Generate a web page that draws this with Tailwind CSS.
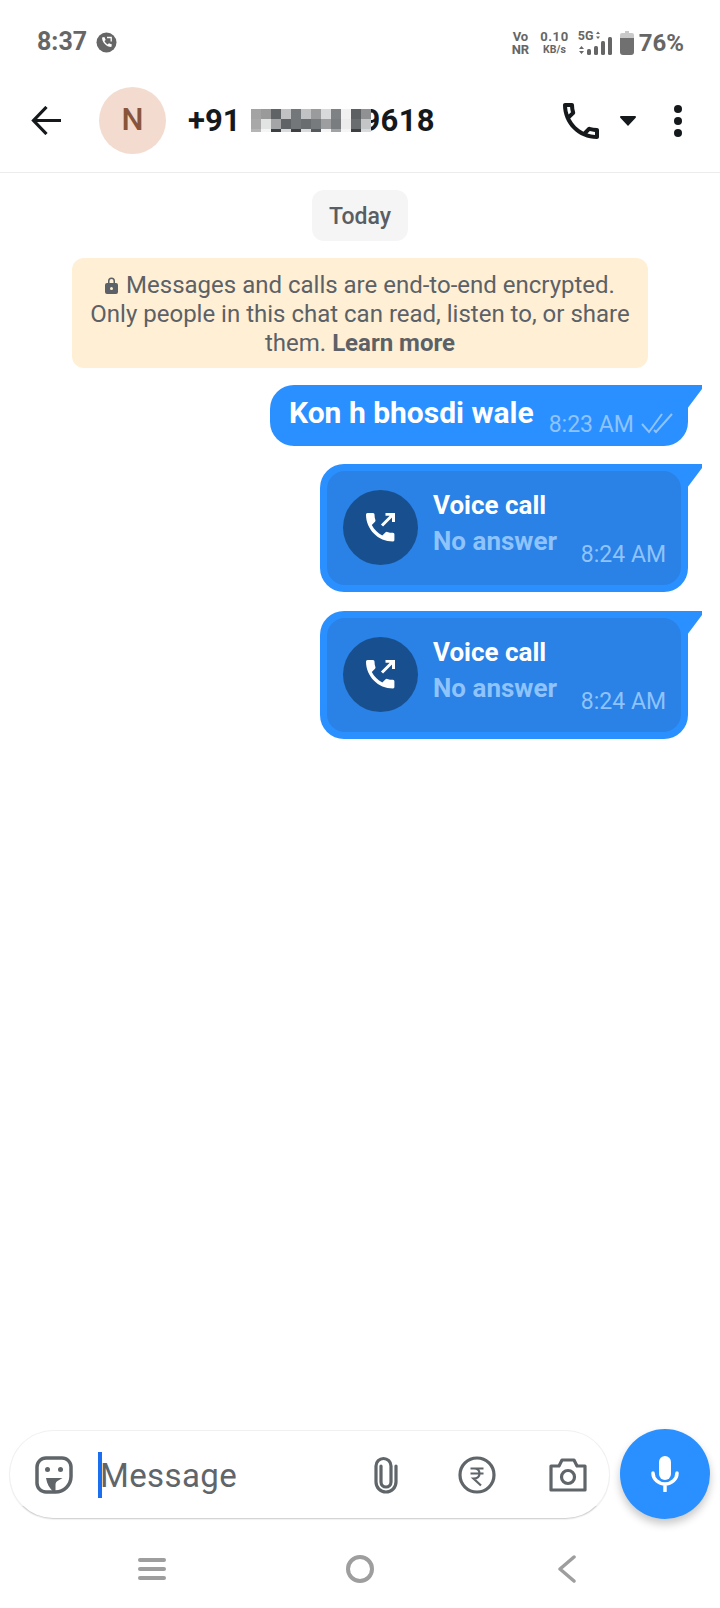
<!DOCTYPE html>
<html>
<head>
<meta charset="utf-8">
<script src="https://cdn.jsdelivr.net/npm/@tailwindcss/browser@4"></script>
</head>
<body class="bg-white">
<div class="w-[720px] h-[1608px] flex flex-col bg-white font-['Roboto',sans-serif] overflow-hidden">

  <!-- status bar -->
  <div class="h-[76px] shrink-0 flex items-start justify-between pl-[37px] pr-[36px] pt-[25px] text-[#666]">
    <div class="flex items-center gap-[9px]">
      <span class="text-[25px] leading-[34px] font-bold">8:37</span>
      <svg class="w-[21px] h-[21px]" viewBox="0 0 21 21"><circle cx="10.500" cy="10.500" r="10" fill="#666"/><path d="M6 5.500l2.400-.6 1.300 3-1.300 1.200c.7 1.600 1.800 2.700 3.300 3.400l1.200-1.300 3 1.400-.6 2.400c-5-.2-9-4.300-9.300-9.500z" fill="#fff"/><path d="M11 5.500h4.200v4" fill="none" stroke="#fff" stroke-width="1.300"/></svg>
    </div>
    <div class="flex items-center h-[34px] mt-[1px]">
      <div class="flex flex-col items-center text-[13px] leading-[13px] font-bold"><span>Vo</span><span>NR</span></div>
      <div class="flex flex-col items-center ml-[11px]"><span class="text-[13px] leading-[13px] font-bold tracking-[0.6px]">0.10</span><span class="text-[10.500px] leading-[13px] font-bold">KB/s</span></div>
      <div class="w-[36px] h-[27px] ml-[9px] relative">
        <span class="absolute left-0 -top-[1px] text-[12.500px] leading-[14px] font-bold">5G</span>
        <svg class="w-[36px] h-[27px]" viewBox="0 0 36 27" fill="#666"><path d="M18 4l2-2.500 2 2.500zM18 6.500l2 2.500 2-2.500zM1 19l2.500-3 2.500 3zM1 21l2.500 3 2.500-3z"/><rect x="9" y="19" width="4" height="6" rx="1.500"/><rect x="16" y="16" width="4" height="9" rx="1.500"/><rect x="23" y="11" width="4" height="14" rx="1.500"/><rect x="30" y="7" width="4" height="18" rx="1.500"/></svg>
      </div>
      <svg class="w-[14px] h-[24px] ml-[6px]" viewBox="0 0 14 24"><path d="M5 0h4v2h3a2 2 0 0 1 2 2v3H0V4a2 2 0 0 1 2-2h3z" fill="#c9c9c9"/><path d="M0 7h14v14a3 3 0 0 1-3 3H3a3 3 0 0 1-3-3z" fill="#707070"/></svg>
      <span class="text-[24px] leading-[34px] font-bold ml-[5px]">76%</span>
    </div>
  </div>

  <!-- header -->
  <header class="h-[97px] shrink-0 border-b border-[#ececec] flex items-center pl-[31px] pr-[38px] pb-[7px]">
    <svg class="w-[30px] h-[29px] shrink-0" viewBox="0 0 30 29" fill="none" stroke="#15191c" stroke-width="3.200"><path d="M30 14.500H3M15.500 1L2.500 14.500 15.500 28"/></svg>
    <div class="w-[67px] h-[67px] ml-[38px] rounded-full bg-[#f3dccf] flex items-center justify-center text-[#89553a] text-[31px] font-medium">N</div>
    <div class="ml-[22px] flex items-center text-[#15191c] text-[31px] font-bold leading-[36px]">
      <span>+91</span>
      <div class="relative z-10 ml-[11px] grid grid-cols-[repeat(12,10px)] grid-rows-[10px_10px_3px] h-[23px] w-[120px]">
        <i class="bg-[#a3a3a3]"></i><i class="bg-[#9a9a9a]"></i><i class="bg-[#5f6366]"></i><i class="bg-[#c0c2c3]"></i><i class="bg-[#73777a]"></i><i class="bg-[#c0c2c3]"></i><i class="bg-[#999b9c]"></i><i class="bg-[#d8d9da]"></i><i class="bg-[#7f8284]"></i><i class="bg-[#f1f1f1]"></i><i class="bg-[#5c6063]"></i><i class="bg-[#8f9193]"></i>
        <i class="bg-[#a8a8a8]"></i><i class="bg-[#e2e3e3]"></i><i class="bg-[#a3a5a6]"></i><i class="bg-[#5f6366]"></i><i class="bg-[#73777a]"></i><i class="bg-[#696d70]"></i><i class="bg-[#777b7d]"></i><i class="bg-[#9c9e9f]"></i><i class="bg-[#7a7d7f]"></i><i class="bg-[#ececec]"></i><i class="bg-[#6a6d70]"></i><i class="bg-[#c4c5c6]"></i>
        <i class="bg-[#b5b5b5]"></i><i class="bg-[#f5f5f5]"></i><i class="bg-[#3c4043]"></i><i class="bg-[#d9dadb]"></i><i class="bg-[#3c4043]"></i><i class="bg-[#d9dadb]"></i><i class="bg-[#55595c]"></i><i class="bg-[#f5f5f5]"></i><i class="bg-[#a0a2a4]"></i><i class="bg-[#f5f5f5]"></i><i class="bg-[#3c4043]"></i><i class="bg-[#d9dadb]"></i>
      </div>
      <span class="-ml-[9px] tracking-[0.3px]">9618</span>
    </div>
    <svg class="w-[36px] h-[36px] ml-auto fill-[#15191c]" viewBox="3 3 18 18"><path d="M6.540 5c.06.89.21 1.760.45 2.590l-1.200 1.200c-.41-1.200-.67-2.470-.76-3.790h1.510m9.860 12.020c.85.24 1.720.39 2.600.45v1.490c-1.320-.09-2.590-.35-3.800-.75l1.200-1.190M7.500 3H4c-.55 0-1 .45-1 1 0 9.390 7.610 17 17 17 .55 0 1-.45 1-1v-3.490c0-.55-.45-1-1-1-1.240 0-2.450-.2-3.570-.57-.1-.04-.21-.05-.31-.05-.26 0-.51.1-.71.29l-2.200 2.200c-2.830-1.450-5.150-3.760-6.590-6.590l2.200-2.200c.28-.28.36-.67.25-1.020C8.700 6.450 8.500 5.250 8.500 4c0-.55-.45-1-1-1z"/></svg>
    <svg class="w-[16px] h-[10px] ml-[21px]" viewBox="0 0 16 10"><path d="M1 0h14a1 1 0 0 1 .7 1.700L8 10 .3 1.700A1 1 0 0 1 1 0z" fill="#15191c"/></svg>
    <div class="flex flex-col gap-[4px] ml-[38px]"><i class="block w-[8px] h-[8px] rounded-full bg-[#15191c]"></i><i class="block w-[8px] h-[8px] rounded-full bg-[#15191c]"></i><i class="block w-[8px] h-[8px] rounded-full bg-[#15191c]"></i></div>
  </header>

  <!-- chat -->
  <main class="flex-1 flex flex-col items-center pt-[17px]">
    <div class="h-[51px] w-[96px] pt-[3px] rounded-[12px] bg-[#f5f5f5] flex items-center justify-center text-[#585e63] text-[23px] font-medium">Today</div>
    <div class="mt-[17px] w-[576px] h-[110px] rounded-[12px] bg-[#ffefd5] text-center text-[#5b6166] text-[24px] leading-[29px] pt-[13px]">
      <svg class="inline-block w-[13px] h-[17px] mr-[8px] -mt-[3px] align-middle" viewBox="0 0 13 17"><path d="M2 6h1V4a3.500 3.500 0 0 1 7 0v2h1a2 2 0 0 1 2 2v7a2 2 0 0 1-2 2H2a2 2 0 0 1-2-2V8a2 2 0 0 1 2-2zm2.500 0h4V4a2 2 0 0 0-4 0z" fill="#5b6166"/><circle cx="6.500" cy="11.500" r="1.500" fill="#ffefd5"/></svg>Messages and calls are end-to-end encrypted.<br>Only people in this chat can read, listen to, or share<br>them. <b class="font-bold">Learn more</b>
    </div>

    <div class="w-full pr-[18px] pl-[18px] mt-[17px] flex flex-col items-end gap-[19px]">
      <!-- text bubble -->
      <div class="relative w-[432px] h-[61px]">
        <div class="absolute right-0 top-0 w-[30px] h-[24px] bg-[#2a90ff] [clip-path:polygon(0_0,100%_0,100%_4px,50%_100%,0_100%)]"></div>
        <div class="h-full w-[418px] rounded-[24px] rounded-tr-none bg-[#2a90ff] flex items-start pl-[19px]">
          <span class="text-white text-[30px] leading-[36px] font-bold mt-[10px] whitespace-nowrap">Kon h bhosdi wale</span>
          <span class="text-[#8fc3fb] text-[23px] leading-[28px] ml-[15px] mt-[26px] whitespace-nowrap">8:23 AM</span>
          <svg class="w-[32px] h-[22px] ml-[7px] mt-[27px] shrink-0" viewBox="0 0 32 22" fill="none" stroke="#8fc3fb" stroke-width="2"><path d="M1 12l7 8L21 2M13 18l2 2L31 2"/></svg>
        </div>
      </div>

      <!-- call bubble -->
      <div class="relative w-[382px] h-[128px] -mt-[1px]">
        <div class="absolute right-0 top-0 w-[30px] h-[24px] bg-[#2a90ff] [clip-path:polygon(0_0,100%_0,100%_4px,50%_100%,0_100%)]"></div>
        <div class="h-full w-[368px] rounded-[24px] rounded-tr-none bg-[#2a90ff] p-[7px]">
          <div class="relative h-full rounded-[18px] bg-[#2a81e6] flex items-start pl-[16px] pt-[16px]">
            <div class="w-[75px] h-[75px] mt-[3px] shrink-0 rounded-full bg-[#18508f] flex items-center justify-center">
              <svg class="w-[29px] h-[29px]" viewBox="0 0 29 29"><path d="M0 1.500A1.500 1.500 0 0 1 1.500 0h5.500a1.500 1.500 0 0 1 1.500 1.500c0 2 .3 3.900.9 5.600.2.600.1 1.200-.4 1.700L5.800 12.100c2.300 4.500 6 8.100 10.500 10.500l3.300-3.300c.4-.4 1.100-.6 1.600-.4 1.800.6 3.700.9 5.700.9a1.500 1.500 0 0 1 1.500 1.500v5.500A1.500 1.500 0 0 1 27 28.500C12.100 28.500 0 16.400 0 1.500z" fill="#fff"/><path d="M16 12.500L27 1.500M19.500 1.300h8v7.700" fill="none" stroke="#fff" stroke-width="3"/></svg>
            </div>
            <div class="ml-[15px] flex flex-col">
              <span class="text-white text-[26px] leading-[36px] font-bold">Voice call</span>
              <span class="text-[#8fc3fb] text-[26px] leading-[36px] font-bold">No answer</span>
            </div>
            <span class="absolute right-[15px] bottom-[16px] text-[#8fc3fb] text-[23px] leading-[28px]">8:24 AM</span>
          </div>
        </div>
      </div>

      <div class="relative w-[382px] h-[128px]">
        <div class="absolute right-0 top-0 w-[30px] h-[24px] bg-[#2a90ff] [clip-path:polygon(0_0,100%_0,100%_4px,50%_100%,0_100%)]"></div>
        <div class="h-full w-[368px] rounded-[24px] rounded-tr-none bg-[#2a90ff] p-[7px]">
          <div class="relative h-full rounded-[18px] bg-[#2a81e6] flex items-start pl-[16px] pt-[16px]">
            <div class="w-[75px] h-[75px] mt-[3px] shrink-0 rounded-full bg-[#18508f] flex items-center justify-center">
              <svg class="w-[29px] h-[29px]" viewBox="0 0 29 29"><path d="M0 1.500A1.500 1.500 0 0 1 1.500 0h5.500a1.500 1.500 0 0 1 1.500 1.500c0 2 .3 3.900.9 5.600.2.600.1 1.200-.4 1.700L5.800 12.100c2.300 4.500 6 8.100 10.500 10.500l3.300-3.300c.4-.4 1.100-.6 1.600-.4 1.800.6 3.700.9 5.700.9a1.500 1.500 0 0 1 1.500 1.500v5.500A1.500 1.500 0 0 1 27 28.500C12.100 28.500 0 16.400 0 1.500z" fill="#fff"/><path d="M16 12.500L27 1.500M19.500 1.300h8v7.700" fill="none" stroke="#fff" stroke-width="3"/></svg>
            </div>
            <div class="ml-[15px] flex flex-col">
              <span class="text-white text-[26px] leading-[36px] font-bold">Voice call</span>
              <span class="text-[#8fc3fb] text-[26px] leading-[36px] font-bold">No answer</span>
            </div>
            <span class="absolute right-[15px] bottom-[16px] text-[#8fc3fb] text-[23px] leading-[28px]">8:24 AM</span>
          </div>
        </div>
      </div>
    </div>
  </main>

  <!-- composer -->
  <div class="shrink-0 h-[90px] flex items-center pl-[9px] pr-[10px] gap-[10px]">
    <div class="h-[89px] mt-[1px] w-[601px] rounded-[45px] bg-white border border-[#f0f0f0] border-b-[#d4d4d4] shadow-[0_1px_1px_rgba(0,0,0,0.06)] flex items-center pl-[25px]">
      <svg class="w-[38px] h-[38px] shrink-0" viewBox="0 0 38 38" fill="none"><path d="M11 2h16a9 9 0 0 1 9 9v9.500C36 29 29 36 20.500 36H11a9 9 0 0 1-9-9V11a9 9 0 0 1 9-9z" stroke="#5f6569" stroke-width="3.500" stroke-linejoin="round"/><circle cx="12.500" cy="13.500" r="2.500" fill="#5f6569"/><circle cx="25.500" cy="13.500" r="2.500" fill="#5f6569"/><path d="M11 22h16.500l-5 3c-1.500 1-2 2-2 4v6h-3c-3-3-5.500-7-6.500-13z" fill="#5f6569"/></svg>
      <div class="w-[4px] h-[46px] bg-[#1a6ff0] ml-[25px] shrink-0"></div>
      <span class="text-[#5f6569] text-[33px] leading-[40px] tracking-[0.4px] -ml-[2px] mt-[2px]">Message</span>
      <svg class="w-[24px] h-[38px] ml-[137px] shrink-0" viewBox="0 0 24 38" fill="none" stroke="#5f6569" stroke-width="3.200" stroke-linecap="round"><path d="M22 10V26A10 10 0 0 1 2 26V10A7.500 7.500 0 0 1 17 10V26A5 5 0 0 1 7 26V10"/></svg>
      <svg class="w-[38px] h-[38px] ml-[60px] shrink-0" viewBox="0 0 38 38" fill="none" stroke="#5f6569"><circle cx="19" cy="19" r="17" stroke-width="3.200"/><path d="M12.500 12.500h13M12.500 17.500h13M16 12.500c4 0 5.500 2 5.500 5s-2 5-6 5l7.500 7" stroke-width="2.200"/></svg>
      <svg class="w-[38px] h-[34px] ml-[53px] shrink-0" viewBox="0 0 38 34" fill="none" stroke="#5f6569" stroke-width="3.200" stroke-linejoin="round"><path d="M2 8h8l3-6h12l3 6h8v24H2z"/><circle cx="19" cy="19" r="6.500"/></svg>
    </div>
    <div class="w-[90px] h-[90px] shrink-0 rounded-full bg-[#2a90ff] shadow-[0_5px_8px_rgba(0,0,0,0.22)] flex items-center justify-center">
      <svg class="w-[28px] h-[36px]" viewBox="0 0 28 36" fill="none"><rect x="8" y="0" width="12" height="24" rx="6" fill="#fff"/><path d="M2 17a12 11 0 0 0 24 0M14 28v7" stroke="#fff" stroke-width="3.500" stroke-linecap="round"/></svg>
    </div>
  </div>

  <!-- nav -->
  <nav class="h-[89px] shrink-0 flex items-start pt-[39px] pl-[138px]">
    <div class="w-[28px] flex flex-col gap-[5px]"><i class="block h-[4px] rounded-full bg-[#9e9e9e]"></i><i class="block h-[4px] rounded-full bg-[#9e9e9e]"></i><i class="block h-[4px] rounded-full bg-[#9e9e9e]"></i></div>
    <div class="w-[28px] h-[28px] rounded-full border-[4px] border-[#9e9e9e] ml-[180px] -mt-[3px]"></div>
    <svg class="w-[18px] h-[28px] ml-[184px] -mt-[3px]" viewBox="0 0 18 28" fill="none" stroke="#9e9e9e" stroke-width="3.500" stroke-linecap="round" stroke-linejoin="round"><path d="M16 2L2 14l14 12"/></svg>
  </nav>
</div>
</body>
</html>
